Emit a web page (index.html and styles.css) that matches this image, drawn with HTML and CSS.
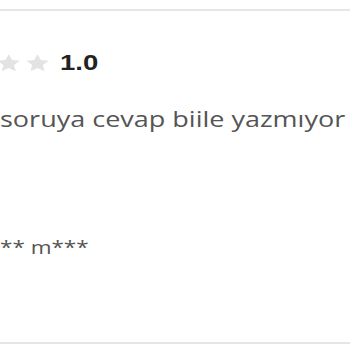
FILE: index.html
```html
<!DOCTYPE html>
<html lang="tr">
<head>
    <meta charset="UTF-8">
    <title>Yorum</title>
    <link rel="stylesheet" href="styles.css">
</head>
<body>

<div class="review">
    <div class="content">
        <div class="rating">
            <div class="stars">
                <svg class="star" viewBox="0 0 24 24"><path d="M12 1.5l3.2 7 7.6.8-5.7 5.1 1.6 7.5L12 18l-6.7 3.9 1.6-7.5L1.2 9.3l7.6-.8z"/></svg>
                <svg class="star" viewBox="0 0 24 24"><path d="M12 1.5l3.2 7 7.6.8-5.7 5.1 1.6 7.5L12 18l-6.7 3.9 1.6-7.5L1.2 9.3l7.6-.8z"/></svg>
                <svg class="star" viewBox="0 0 24 24"><path d="M12 1.5l3.2 7 7.6.8-5.7 5.1 1.6 7.5L12 18l-6.7 3.9 1.6-7.5L1.2 9.3l7.6-.8z"/></svg>
            </div>
            <span class="score">1.0</span>
        </div>

        <p class="comment">soruya cevap biile yazmıyor</p>

        <p class="author">** m***</p>
    </div>
</div>

</body>
</html>
```

FILE: styles.css
```css
body {
    margin: 0;
    background-color: #fff;
    font-family: "Open Sans", sans-serif;
    overflow: hidden;
}

.review {
    margin-top: 9px;
    height: 335px;
    border-top: 2px solid #e6e6e6;
    border-bottom: 2px solid #e6e6e6;
    box-sizing: border-box;
    padding-top: 39px;
}

/* screenshot is stretched wide, so stretch the content to match */
.content {
    transform: scaleX(1.25);
    transform-origin: left top;
}

.rating {
    display: flex;
    align-items: center;
    gap: 8px;
}

.stars {
    display: flex;
    gap: 3px;
    margin-left: -26px;
}

.star {
    width: 20px;
    height: 20px;
    fill: #e3e3e3;
}

.score {
    font-family: "Liberation Sans", Arial, sans-serif;
    font-weight: bold;
    font-size: 22px;
    color: #222;
}

.comment {
    margin: 28px 0 0;
    font-size: 21.6px;
    color: #555;
    white-space: nowrap;
}

.author {
    margin: 102px 0 0;
    font-size: 18px;
    color: #555;
}
```
